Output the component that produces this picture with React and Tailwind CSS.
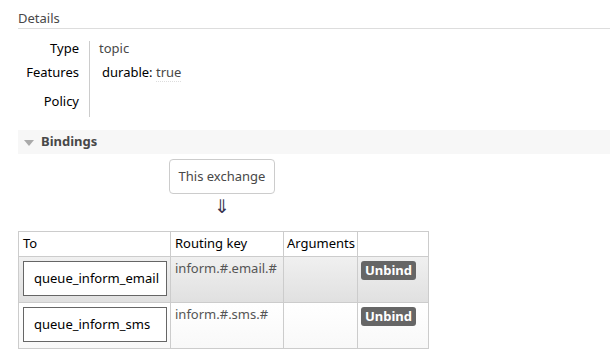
export default function App() {
  const bindings = [
    { to: "queue_inform_email", key: "inform.#.email.#", shade: "bg-gradient-to-b from-[#f0f0f0] to-[#e0e0e0]" },
    { to: "queue_inform_sms", key: "inform.#.sms.#", shade: "bg-gradient-to-b from-white to-[#f8f8f8]" },
  ];

  return (
    <div className="min-h-screen w-[610px] bg-white pl-[18px] pt-[11px] font-['Noto_Sans',sans-serif] text-[13px] text-[#484848]">
      {/* Details */}
      <div className="border-b border-[#dddddd] pb-[3px] leading-[14px]">Details</div>
      <div className="mt-[12px] flex">
        <div className="flex w-[61px] flex-col items-end text-black">
          <div className="h-[24px] leading-[14px]">Type</div>
          <div className="h-[29px] leading-[14px]">Features</div>
          <div className="h-[24px] leading-[14px]">Policy</div>
        </div>
        <div className="ml-[10px] h-[76px] border-l border-[#cccccc]" />
        <div className="ml-[9px] flex flex-col">
          <div className="h-[24px] leading-[14px]">topic</div>
          <div className="ml-[3px] h-[29px] leading-[14px]">
            <span className="text-black">durable:</span>{" "}
            <span className="border-b border-dotted border-[#dddddd]">true</span>
          </div>
        </div>
      </div>

      {/* Bindings */}
      <div className="mt-[12px] flex h-[24px] items-center bg-[#f7f7f7] pl-[6px]">
        <svg width="10" height="6" viewBox="0 0 10 6" className="mt-[1px]">
          <path d="M0 0 L10 0 L5 6 Z" fill="#aaaaaa" />
        </svg>
        <span className="ml-[7px] font-bold text-[#484848]">Bindings</span>
      </div>

      <div className="ml-[151px] mt-[5px] flex w-[106px] flex-col items-center">
        <div className="flex h-[35px] w-[106px] items-center justify-center rounded-[4px] border border-[#cccccc] text-[#484848]">
          This exchange
        </div>
        <div className="mt-[2px] text-[19px] leading-[20px] text-[#3a3550]">⇓</div>
      </div>

      <table className="mt-[15px] w-[410px] table-fixed border-collapse">
        <thead>
          <tr className="h-[25px] text-black">
            <th className="w-[152px] border border-[#cccccc] px-[4px] text-left font-normal">To</th>
            <th className="w-[113px] border border-[#cccccc] px-[4px] text-left font-normal">Routing key</th>
            <th className="w-[74px] border border-[#cccccc] px-[3px] text-left font-normal">Arguments</th>
            <th className="w-[71px] border border-[#cccccc]" />
          </tr>
        </thead>
        <tbody>
          {bindings.map((b) => (
            <tr key={b.to} className={`h-[46px] ${b.shade}`}>
              <td className="border border-[#cccccc] px-[4px] pt-[4px] align-top">
                <div className="flex h-[35px] w-[144px] items-center border border-[#666666] bg-white pl-[10px] text-black">
                  {b.to}
                </div>
              </td>
              <td className="border border-[#cccccc] px-[4px] pt-[3px] align-top leading-[16px] text-[#555555]">
                {b.key}
              </td>
              <td className="border border-[#cccccc]" />
              <td className="border border-[#cccccc] px-[3px] pt-[4px] align-top">
                <span className="inline-flex h-[19px] w-[55px] items-center justify-center rounded-[3px] bg-[#666666] font-bold text-white">
                  Unbind
                </span>
              </td>
            </tr>
          ))}
        </tbody>
      </table>
    </div>
  );
}
